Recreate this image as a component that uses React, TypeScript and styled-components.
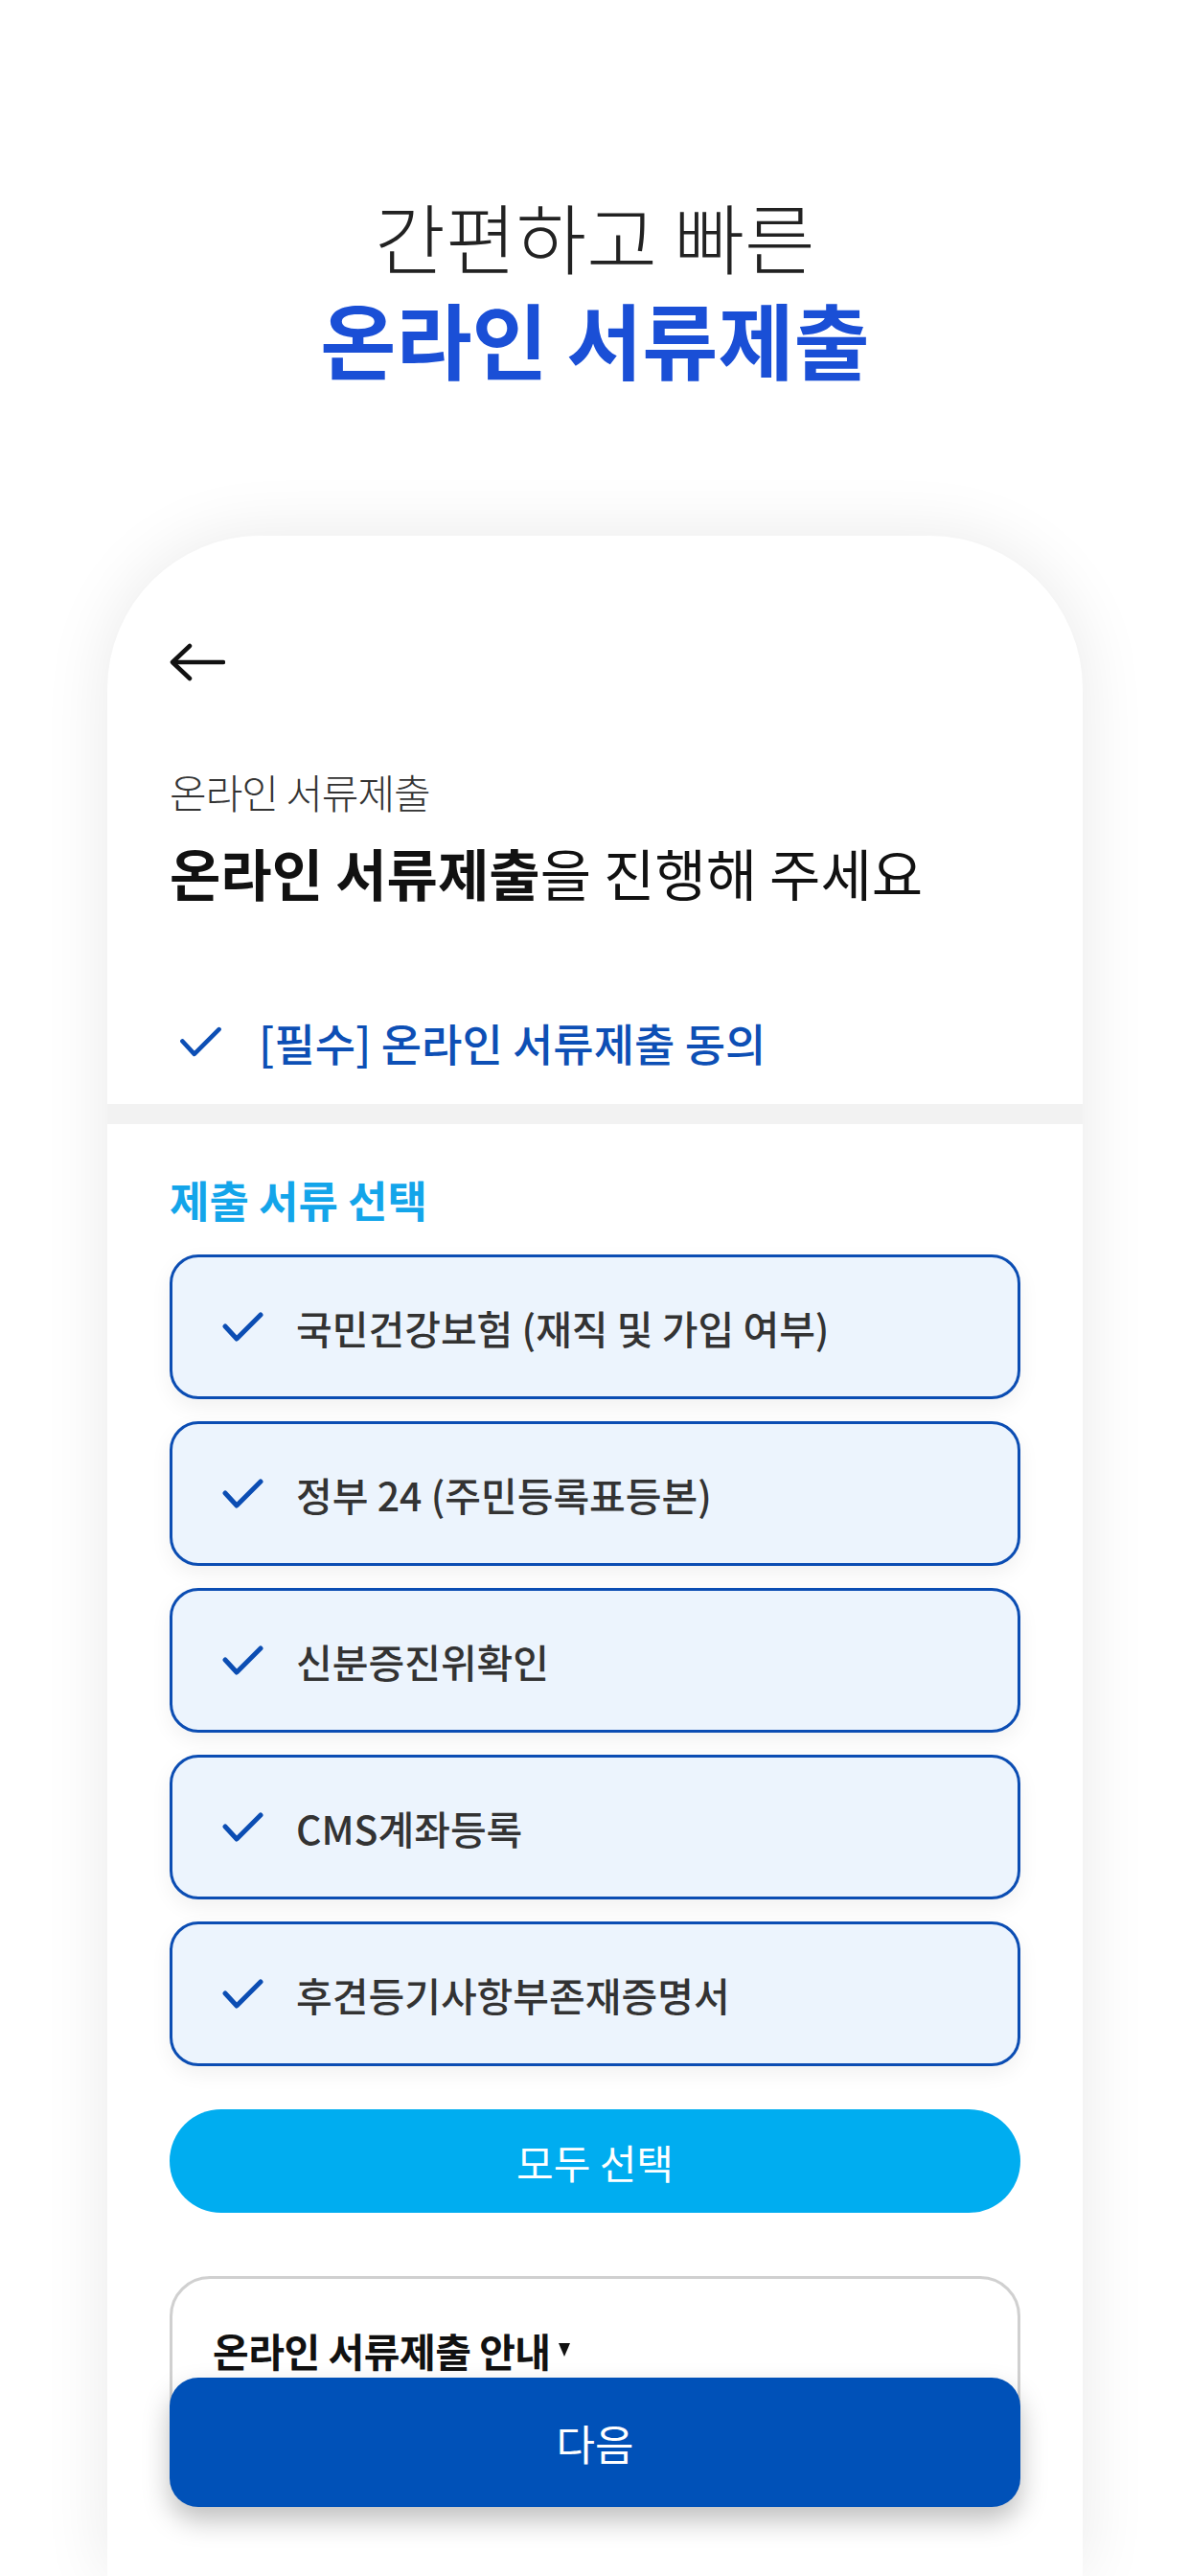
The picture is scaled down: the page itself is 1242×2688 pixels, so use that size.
import React from 'react'
import styled, { createGlobalStyle } from 'styled-components'

const GlobalStyle = createGlobalStyle`
  html, body {
    margin: 0;
    padding: 0;
    background: #ffffff;
  }
  body {
    font-family: "Noto Sans CJK KR", "Noto Sans", sans-serif;
    color: #111111;
  }
  * {
    box-sizing: border-box;
  }
`

const Page = styled.div`
  width: 1242px;
  height: 2688px;
  overflow: hidden;
  display: flex;
  flex-direction: column;
  align-items: center;
  background: #ffffff;
`

// first line is the light grey tagline, the rest is the bold blue title
const HeroTitle = styled.h1`
  align-self: stretch;
  margin: 0;
  padding-top: 191px;
  text-align: center;
  white-space: pre;
  line-height: 108px;
  font-size: 86px;
  font-weight: 700;
  color: #1a4fd6;

  &::first-line {
    font-size: 80px;
    font-weight: 300;
    color: #222222;
  }
`

const Card = styled.div`
  position: relative;
  margin-top: 152px;
  width: 1018px;
  flex: 1;
  background: #ffffff;
  border-radius: 160px 160px 0 0;
  box-shadow: 0 0 70px rgba(0, 0, 0, 0.09);
`

const TopSection = styled.div`
  padding: 112px 65px 0;
`

const BackButton = styled.button`
  display: block;
  width: 58px;
  height: 40px;
  padding: 0;
  border: 0;
  background: none;
`

const Caption = styled.div`
  margin-top: 85px;
  height: 60px;
  line-height: 60px;
  font-size: 42px;
  font-weight: 300;
  color: #333333;
  letter-spacing: -1px;
`

const Heading = styled.h2`
  margin: 19px 0 0;
  height: 70px;
  line-height: 70px;
  font-size: 58px;
  font-weight: 400;
  letter-spacing: 0;
  color: #111111;
  white-space: nowrap;

  strong {
    font-weight: 700;
  }
`

const AgreeRow = styled.div`
  margin-top: 109px;
  height: 66px;
  display: flex;
  align-items: center;
  gap: 38px;
  padding-left: 10px;
`

const AgreeText = styled.span`
  font-size: 46px;
  font-weight: 500;
  letter-spacing: 0;
  color: #0d4fb5;
  white-space: nowrap;
`

const Band = styled.div`
  margin-top: 32px;
  height: 21px;
  background: #f2f2f2;
`

const BottomSection = styled.div`
  padding: 49px 65px 0;
`

const SectionTitle = styled.h3`
  margin: 0;
  height: 60px;
  line-height: 60px;
  font-size: 45px;
  font-weight: 700;
  letter-spacing: 0;
  color: #13a5ea;
`

const DocList = styled.div`
  margin-top: 27px;
  display: flex;
  flex-direction: column;
  gap: 23px;
`

const DocItem = styled.div`
  height: 151px;
  display: flex;
  align-items: center;
  gap: 34px;
  padding-left: 52px;
  border: 3px solid #0b4db3;
  border-radius: 30px;
  background: #ecf4fd;
  box-shadow: 0 8px 22px rgba(0, 0, 0, 0.06);
`

const DocText = styled.span`
  font-size: 41px;
  font-weight: 500;
  letter-spacing: 0;
  color: #333333;
  white-space: nowrap;
`

const SelectAllButton = styled.button`
  display: block;
  width: 100%;
  margin-top: 45px;
  height: 108px;
  border: 0;
  border-radius: 54px;
  background: #00adf0;
  color: #ffffff;
  font-family: inherit;
  font-size: 42px;
  font-weight: 400;
  letter-spacing: 0;
`

const InfoBox = styled.div`
  margin-top: 66px;
  height: 200px;
  padding: 49px 0 0 42px;
  border: 3px solid #d0d0d0;
  border-radius: 42px;
  background: #ffffff;
  display: flex;
  align-items: flex-start;
`

const InfoTitle = styled.span`
  display: inline-flex;
  align-items: center;
  height: 50px;
  font-size: 41px;
  font-weight: 700;
  letter-spacing: -0.5px;
  color: #111111;
  white-space: nowrap;
`

const Caret = styled.span`
  display: inline-block;
  margin-left: 8px;
  width: 0;
  height: 0;
  border-left: 6px solid transparent;
  border-right: 6px solid transparent;
  border-top: 14px solid #111111;
`

const NextButton = styled.button`
  position: absolute;
  left: 65px;
  right: 65px;
  bottom: 72px;
  height: 135px;
  border: 0;
  border-radius: 30px;
  background: #0051b8;
  color: #ffffff;
  font-family: inherit;
  font-size: 44px;
  font-weight: 400;
  letter-spacing: 0;
  box-shadow: 0 14px 28px rgba(0, 0, 0, 0.25);
`

const BackArrow = () => (
  <svg width="58" height="40" viewBox="0 0 58 40" fill="none">
    <path d="M56 20H4" stroke="#111" strokeWidth="4.5" strokeLinecap="round" />
    <path d="M21 3L3 20L21 37" stroke="#111" strokeWidth="4.5" strokeLinecap="round" strokeLinejoin="round" />
  </svg>
)

const Check = ({ color, w = 43, h = 32, sw = 5 }: { color: string; w?: number; h?: number; sw?: number }) => (
  <svg width={w} height={h} viewBox="0 0 43 32" fill="none" style={{ flexShrink: 0 }}>
    <path d="M3 15L15 28L40 3" stroke={color} strokeWidth={sw} strokeLinecap="round" strokeLinejoin="round" />
  </svg>
)

const docs = [
  '국민건강보험 (재직 및 가입 여부)',
  '정부 24 (주민등록표등본)',
  '신분증진위확인',
  'CMS계좌등록',
  '후견등기사항부존재증명서',
]

export default function App() {
  return (
    <>
      <GlobalStyle />
      <Page>
        <HeroTitle>{'간편하고 빠른\n온라인 서류제출'}</HeroTitle>
        <Card>
          <TopSection>
            <BackButton aria-label="뒤로">
              <BackArrow />
            </BackButton>
            <Caption>온라인 서류제출</Caption>
            <Heading>
              <strong>온라인 서류제출</strong>을 진행해 주세요
            </Heading>
            <AgreeRow>
              <Check color="#0d4fb5" w={45} h={33} sw={4.5} />
              <AgreeText>[필수] 온라인 서류제출 동의</AgreeText>
            </AgreeRow>
          </TopSection>
          <Band />
          <BottomSection>
            <SectionTitle>제출 서류 선택</SectionTitle>
            <DocList>
              {docs.map((d) => (
                <DocItem key={d}>
                  <Check color="#0b4db3" />
                  <DocText>{d}</DocText>
                </DocItem>
              ))}
            </DocList>
            <SelectAllButton>모두 선택</SelectAllButton>
            <InfoBox>
              <InfoTitle>
                온라인 서류제출 안내
                <Caret />
              </InfoTitle>
            </InfoBox>
          </BottomSection>
          <NextButton>다음</NextButton>
        </Card>
      </Page>
    </>
  )
}
